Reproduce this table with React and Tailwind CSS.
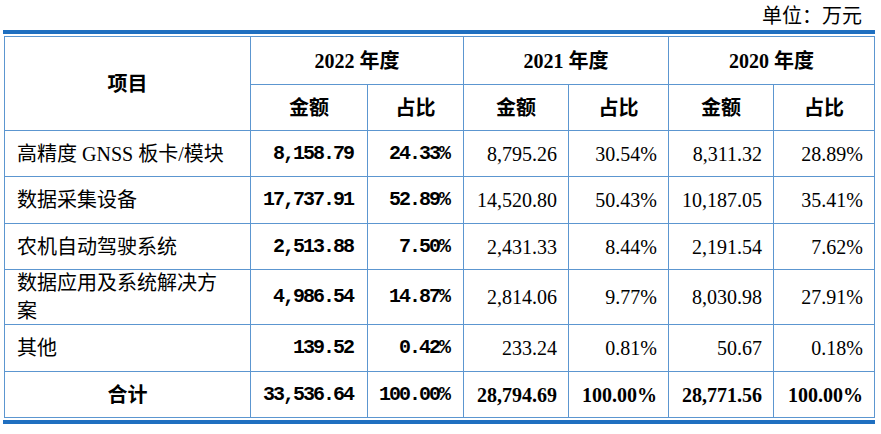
const rows = [
  { label: '高精度 GNSS 板卡/模块', a: '8,158.79', ap: '24.33%', b: '8,795.26', bp: '30.54%', c: '8,311.32', cp: '28.89%' },
  { label: '数据采集设备', a: '17,737.91', ap: '52.89%', b: '14,520.80', bp: '50.43%', c: '10,187.05', cp: '35.41%' },
  { label: '农机自动驾驶系统', a: '2,513.88', ap: '7.50%', b: '2,431.33', bp: '8.44%', c: '2,191.54', cp: '7.62%' },
  { label: '数据应用及系统解决方案', a: '4,986.54', ap: '14.87%', b: '2,814.06', bp: '9.77%', c: '8,030.98', cp: '27.91%' },
  { label: '其他', a: '139.52', ap: '0.42%', b: '233.24', bp: '0.81%', c: '50.67', cp: '0.18%' },
];

const cell = 'border-r border-b border-[#5c96d0] flex items-center';
const mono = "font-['Liberation_Mono','Noto_Sans_CJK_SC',monospace] font-bold tracking-[-2px] justify-end pr-[14px]";
const serifNum = 'justify-end pr-[11px]';
const hdr = "font-['Liberation_Serif','Noto_Sans_CJK_SC',sans-serif] font-bold justify-center";

export default function App() {
  return (
    <div className="w-[881px] h-[434px] bg-white text-black text-[20px] font-['Liberation_Serif','Noto_Sans_CJK_SC',serif] overflow-hidden">
      <div className="h-[30px] flex items-center justify-end pr-[19px] leading-none pt-[2px]">单位：万元</div>
      <div className="ml-[3px] w-[872px] h-[4px] bg-[#1f6fc0]" />
      <div className="h-[2px]" />
      <div className="ml-[4px] w-[871px] grid grid-cols-[246px_117px_96px_105px_100px_105px_101px] grid-rows-[48px_46px_46px_47px_46px_55px_47px_46px] border-l border-t border-[#5c96d0]">
        <div className={`${cell} ${hdr} row-span-2`}>项目</div>
        <div className={`${cell} ${hdr} col-span-2`}>2022 年度</div>
        <div className={`${cell} ${hdr} col-span-2`}>2021 年度</div>
        <div className={`${cell} ${hdr} col-span-2`}>2020 年度</div>
        <div className={`${cell} ${hdr}`}>金额</div>
        <div className={`${cell} ${hdr}`}>占比</div>
        <div className={`${cell} ${hdr}`}>金额</div>
        <div className={`${cell} ${hdr}`}>占比</div>
        <div className={`${cell} ${hdr}`}>金额</div>
        <div className={`${cell} ${hdr}`}>占比</div>
        {rows.map((r) => (
          <React.Fragment key={r.label}>
            <div className={`${cell} pl-[12px] pr-[20px] leading-[28px]`}>{r.label}</div>
            <div className={`${cell} ${mono}`}>{r.a}</div>
            <div className={`${cell} ${mono}`}>{r.ap}</div>
            <div className={`${cell} ${serifNum}`}>{r.b}</div>
            <div className={`${cell} ${serifNum}`}>{r.bp}</div>
            <div className={`${cell} ${serifNum}`}>{r.c}</div>
            <div className={`${cell} ${serifNum}`}>{r.cp}</div>
          </React.Fragment>
        ))}
        <div className={`${cell} ${hdr}`}>合计</div>
        <div className={`${cell} ${mono}`}>33,536.64</div>
        <div className={`${cell} ${mono}`}>100.00%</div>
        <div className={`${cell} ${serifNum} font-bold`}>28,794.69</div>
        <div className={`${cell} ${serifNum} font-bold`}>100.00%</div>
        <div className={`${cell} ${serifNum} font-bold`}>28,771.56</div>
        <div className={`${cell} ${serifNum} font-bold`}>100.00%</div>
      </div>
      <div className="h-[2px]" />
      <div className="ml-[3px] w-[872px] h-[4px] bg-[#1f6fc0]" />
    </div>
  );
}

import React from 'react';
